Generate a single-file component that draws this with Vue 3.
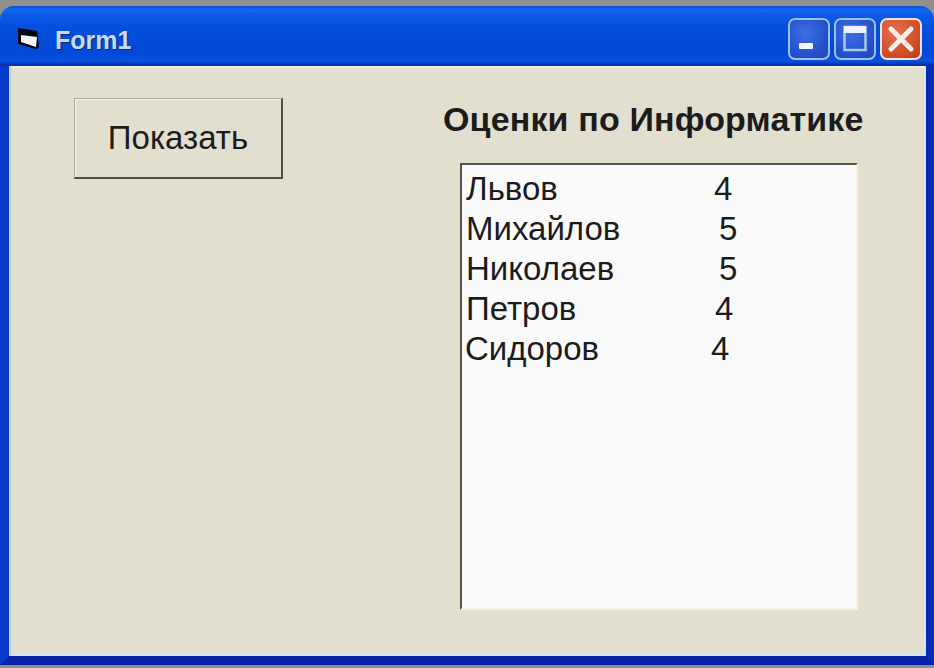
<template>
  <div class="window">
    <div class="titlebar">
      <svg class="form-icon" width="23" height="23" viewBox="0 0 23 23">
        <path d="M1 1 L20 4 L22 20 L19 22 L1 17 Z" fill="#05060f" />
        <path d="M4 8 L20 10 L19 20 L4 15 Z" fill="#f4f6f8" />
      </svg>
      <span class="title">Form1</span>
      <div class="controls">
        <button class="ctl">
          <svg width="38" height="38" viewBox="0 0 38 38">
            <rect x="9" y="23" width="14" height="6" rx="1" fill="#f2f5fb" />
          </svg>
        </button>
        <button class="ctl">
          <svg width="38" height="38" viewBox="0 0 38 38">
            <rect x="8.5" y="7" width="21" height="23" fill="none" stroke="#a9c9f0" stroke-width="2.5" />
            <rect x="8" y="6" width="22" height="7" fill="#eef4fc" />
          </svg>
        </button>
        <button class="ctl close">
          <svg width="38" height="38" viewBox="0 0 38 38">
            <path d="M9 9 L29 29 M29 9 L9 29" stroke="#fbeee8" stroke-width="5" stroke-linecap="round" />
          </svg>
        </button>
      </div>
    </div>
    <div class="client">
      <button class="show-btn">Показать</button>
      <div class="panel">
        <div class="heading">Оценки по Информатике</div>
        <div class="listbox">
          <div v-for="r in rows" :key="r.name" class="row" :style="{ marginLeft: r.indent + 'px' }">
            <span class="name" :style="{ width: r.scoreAt + 'px' }">{{ r.name }}</span>
            <span>{{ r.score }}</span>
          </div>
        </div>
      </div>
    </div>
  </div>
</template>

<script setup>
const rows = [
  { name: 'Львов', score: 4, scoreAt: 248, indent: 0 },
  { name: 'Михайлов', score: 5, scoreAt: 253, indent: 0 },
  { name: 'Николаев', score: 5, scoreAt: 253, indent: 0 },
  { name: 'Петров', score: 4, scoreAt: 249, indent: 0 },
  { name: 'Сидоров', score: 4, scoreAt: 246, indent: -1 }
]
</script>

<style>
html, body {
  margin: 0;
  background: #8f8f8c;
}
</style>

<style scoped>
.window {
  width: 934px;
  height: 668px;
  box-sizing: border-box;
  padding-top: 6px;
  padding-bottom: 3px;
  display: flex;
  flex-direction: column;
  font-family: "Liberation Sans", Arial, sans-serif;
  color: #1c1c1c;
  overflow: hidden;
}

.titlebar {
  height: 60px;
  flex: none;
  display: flex;
  align-items: center;
  padding: 8px 12px 0 17px;
  border-radius: 14px 14px 0 0;
  background: linear-gradient(180deg, #0a50d0 0%, #1068f0 6%, #0a5aea 14%, #0450dc 35%, #0348d6 75%, #0650e0 92%, #0a30a8 98%, #0a2c9c 100%);
  box-sizing: border-box;
}

.form-icon {
  flex: none;
  margin-right: 15px;
  margin-top: -3px;
}

.title {
  font-size: 25px;
  font-weight: 700;
  color: #c4dcf8;
  text-shadow: 1px 1px 1px #0a2a80;
}

.controls {
  margin-left: auto;
  display: flex;
  gap: 4px;
  margin-top: -2px;
}

.ctl {
  width: 42px;
  height: 42px;
  padding: 0;
  border: 2px solid #9cc0ec;
  border-radius: 7px;
  background: radial-gradient(circle at 40% 35%, #3f6fe4 0%, #2450cc 65%, #1c44bc 100%);
  box-sizing: border-box;
  display: flex;
  align-items: center;
  justify-content: center;
  overflow: hidden;
}

.ctl.close {
  border-color: #f0e4de;
  background: radial-gradient(circle at 35% 30%, #e4704c 0%, #cf4a26 70%, #b93c1c 100%);
}

.client {
  flex: 1;
  display: flex;
  align-items: flex-start;
  justify-content: space-between;
  background: #e2dfcf;
  border-left: 9px solid #0a3ccc;
  border-right: 8px solid #0a2cb4;
  border-bottom: 9px solid #0a24a8;
  box-shadow: inset 2px 0 0 #bcd4f0, inset -2px 0 0 #d4e4f0, inset 0 -2px 0 #d4e4f0, inset 0 2px 0 #eef0e6;
  padding: 32px 59px 0 65px;
  min-height: 0;
}

.show-btn {
  width: 209px;
  height: 81px;
  box-sizing: border-box;
  background: #e2dfcf;
  border-style: solid;
  border-width: 1px 2px 2px 1px;
  border-color: #a8a698 #4e4d44 #4e4d44 #a8a698;
  box-shadow: inset 1px 1px 0 #f6f5ec;
  font-family: "Liberation Sans", Arial, sans-serif;
  font-size: 33px;
  color: #1c1c1c;
  padding: 0;
}

.panel {
  width: 424px;
  display: flex;
  flex-direction: column;
}

.heading {
  font-size: 34px;
  font-weight: 700;
  line-height: 36px;
  margin-top: 3px;
  letter-spacing: 0.15px;
  white-space: nowrap;
}

.listbox {
  width: 398px;
  height: 447px;
  margin: 26px 0 0 17px;
  box-sizing: border-box;
  background: #fbfafa;
  border: 2px solid;
  border-color: #55554c #f4f3e8 #f4f3e8 #55554c;
  padding: 4px 0 0 4px;
  font-size: 33px;
  line-height: 40px;
}

.row {
  display: flex;
  white-space: nowrap;
}

.name {
  flex: none;
}
</style>
